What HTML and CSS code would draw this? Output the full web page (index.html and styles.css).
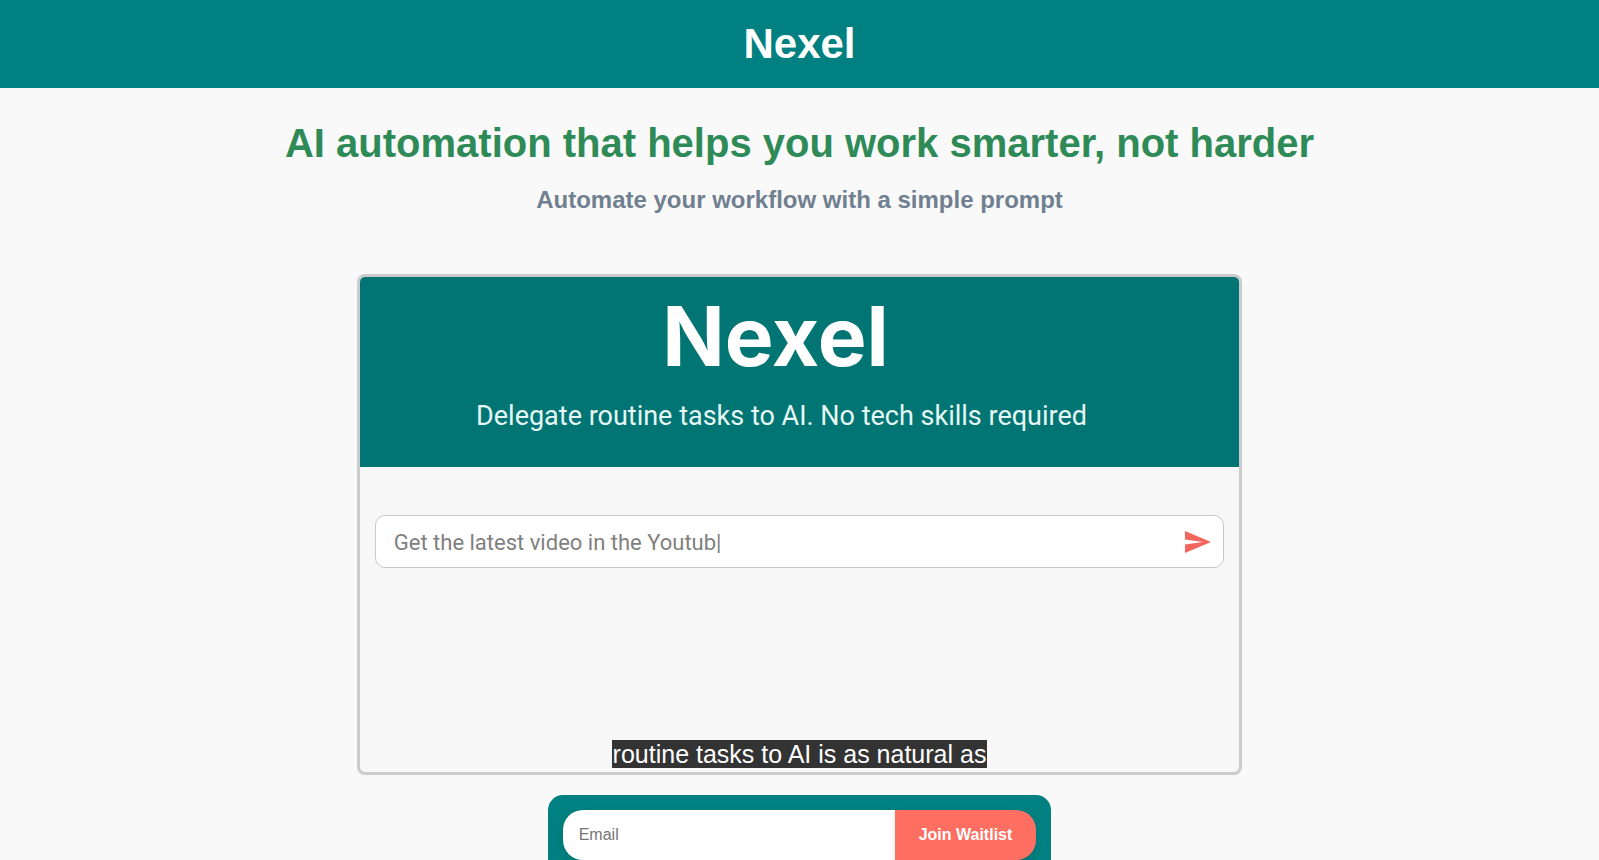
FILE: index.html
```
<!DOCTYPE html>
<html lang="en">
<head>
    <meta charset="UTF-8">
    <meta name="viewport" content="width=device-width, initial-scale=1">
    <title>Nexel</title>
    <link rel="stylesheet" href="styles.css">
</head>
<body>

<header class="site-header">
    <h1>Nexel</h1>
</header>

<main>
    <h2 class="headline">AI automation that helps you work smarter, not harder</h2>
    <h3 class="subline">Automate your workflow with a simple prompt</h3>

    <!-- demo player -->
    <section class="demo" aria-label="Demo">
        <div class="demo-header">
            <p class="demo-title">Nexel</p>
            <p class="demo-tagline">Delegate routine tasks to AI. No tech skills required</p>
        </div>
        <div class="demo-prompt">
            <input class="prompt-input" type="text" value="Get the latest video in the Youtub|" aria-label="Prompt" readonly>
            <button class="prompt-send" type="button" aria-label="Send">
                <svg width="26" height="22" viewBox="0 0 26 22">
                    <path d="M0 0 L26 11 L0 22 V13.5 L18 11 L0 8.5 Z" fill="#f2665e"/>
                </svg>
            </button>
        </div>
        <div class="caption"><span>routine tasks to AI is as natural as</span></div>
    </section>

    <form class="waitlist">
        <input class="email" type="email" placeholder="Email" aria-label="Email">
        <button class="join" type="submit">Join Waitlist</button>
    </form>
</main>

</body>
</html>
```
FILE: styles.css
```
* {
    box-sizing: border-box;
}
body {
    margin: 0;
    background: #f9f9f9;
    font-family: "Liberation Sans", Arial, sans-serif;
}
.site-header {
    background: teal;
    color: #fff;
    padding: 20px;
    text-align: center;
}
.site-header h1 {
    margin: 0;
    font-size: 42px;
    line-height: 48px;
}
main {
    display: flex;
    flex-direction: column;
    align-items: center;
    padding-bottom: 40px;
}
.headline {
    margin: 32px 0 0;
    font-size: 40px;
    line-height: 46px;
    color: seagreen;
    text-align: center;
}
.subline {
    margin: 20px 0 0;
    font-size: 24px;
    line-height: 28px;
    color: slategray;
    text-align: center;
}

/* demo player */
.demo {
    position: relative;
    width: calc(55% + 6px);
    aspect-ratio: 885 / 501;
    margin-top: 60px;
    border: 3px solid #ccc;
    border-radius: 8px;
    background: #f7f7f7;
    overflow: hidden;
    font-family: Roboto, sans-serif;
}
.demo-header {
    height: 190px;
    padding: 20px 36px 0 0;
    background: #007573;
    color: #fff;
    text-align: center;
}
.demo-title {
    margin: 0;
    padding-right: 12px;
    font-family: Inter, sans-serif;
    font-size: 82px;
    font-weight: 700;
    line-height: 80px;
}
.demo-tagline {
    margin: 20px 0 0;
    font-size: 27px;
    line-height: 38px;
    color: #e6f7f5;
}
.demo-prompt {
    display: flex;
    align-items: center;
    height: 53px;
    margin: 48px 15px 0;
    padding: 0 12px 0 18px;
    background: #fff;
    border: 1px solid #c8c8c8;
    border-radius: 10px;
}
.prompt-input {
    flex: 1;
    min-width: 0;
    padding: 2px 0 0;
    border: none;
    outline: none;
    background: none;
    font-family: inherit;
    font-size: 22px;
    color: #808080;
}
.prompt-send {
    display: flex;
    padding: 0;
    border: none;
    background: none;
    cursor: pointer;
}
.caption {
    position: absolute;
    left: 0;
    right: 0;
    bottom: 4px;
    text-align: center;
    font-family: "Liberation Sans", Arial, sans-serif;
    font-size: 25px;
    line-height: 28px;
    color: #fff;
}
.caption span {
    display: inline-block;
    padding: 0 1px;
    background: #333;
}

/* waitlist form */
.waitlist {
    display: flex;
    margin-top: 20px;
    padding: 15px;
    background: teal;
    border-radius: 15px;
}
.email,
.join {
    height: 50px;
    border: none;
    font-family: inherit;
    font-size: 16px;
    box-shadow: 0 4px 8px rgba(0, 0, 0, 0.1);
}
.email {
    width: 332px;
    padding: 0 16px;
    border-radius: 20px 0 0 20px;
}
.join {
    padding: 0 24px;
    background: #ff6f61;
    color: #fff;
    font-weight: bold;
    border-radius: 0 20px 20px 0;
    cursor: pointer;
}
```
